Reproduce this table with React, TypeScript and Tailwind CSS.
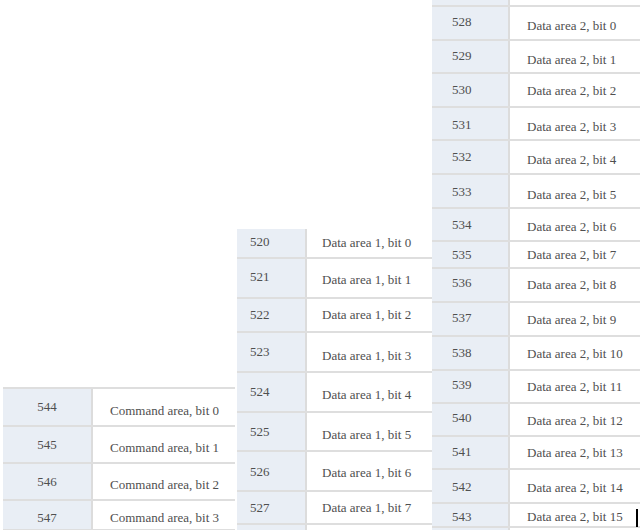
import React from 'react';

// Each row: register number, label, row height, top padding for number and label cells
interface Row {
  num: string;
  label: string;
  h: string;
  numPt: string;
  labelPt: string;
  noBorder?: boolean;
}

interface TableProps {
  rows: Row[];
  pos: string;
  numCol: string;
  numAlign: string;
  labelPl: string;
  bottomBorder?: boolean;
}

function BitTable({ rows, pos, numCol, numAlign, labelPl, bottomBorder }: TableProps) {
  return (
    <div className={`absolute flex flex-col ${pos}`}>
      {rows.map((row, i) => (
        <div
          key={i}
          className={`flex shrink-0 ${row.h} ${row.noBorder ? '' : 'border-t-2 border-[#dedede]'} ${
            bottomBorder && i === rows.length - 1 ? 'border-b-2 border-b-[#dedede]' : ''
          }`}
        >
          <div className={`shrink-0 bg-[#e9eef5] border-r-2 border-[#dcdcdc] ${numCol} ${numAlign} ${row.numPt}`}>
            {row.num}
          </div>
          <div className={`flex-1 bg-white ${labelPl} ${row.labelPt}`}>{row.label}</div>
        </div>
      ))}
    </div>
  );
}

const commandRows: Row[] = [
  { num: '544', label: 'Command area, bit 0', h: 'h-[38px]', numPt: 'pt-[10px]', labelPt: 'pt-[14px]' },
  { num: '545', label: 'Command area, bit 1', h: 'h-[37px]', numPt: 'pt-[10px]', labelPt: 'pt-[13px]' },
  { num: '546', label: 'Command area, bit 2', h: 'h-[37px]', numPt: 'pt-[10px]', labelPt: 'pt-[13px]' },
  { num: '547', label: 'Command area, bit 3', h: 'h-[32px]', numPt: 'pt-[9px]', labelPt: 'pt-[9px]' },
];

const data1Rows: Row[] = [
  { num: '520', label: 'Data area 1, bit 0', h: 'h-[28px]', numPt: 'pt-[5px]', labelPt: 'pt-[6px]', noBorder: true },
  { num: '521', label: 'Data area 1, bit 1', h: 'h-[40px]', numPt: 'pt-[10px]', labelPt: 'pt-[13px]' },
  { num: '522', label: 'Data area 1, bit 2', h: 'h-[34px]', numPt: 'pt-[8px]', labelPt: 'pt-[8px]' },
  { num: '523', label: 'Data area 1, bit 3', h: 'h-[40px]', numPt: 'pt-[11px]', labelPt: 'pt-[15px]' },
  { num: '524', label: 'Data area 1, bit 4', h: 'h-[40px]', numPt: 'pt-[11px]', labelPt: 'pt-[14px]' },
  { num: '525', label: 'Data area 1, bit 5', h: 'h-[39px]', numPt: 'pt-[11px]', labelPt: 'pt-[14px]' },
  { num: '526', label: 'Data area 1, bit 6', h: 'h-[40px]', numPt: 'pt-[12px]', labelPt: 'pt-[13px]' },
  { num: '527', label: 'Data area 1, bit 7', h: 'h-[33px]', numPt: 'pt-[8px]', labelPt: 'pt-[8px]' },
  { num: '', label: '', h: 'h-[12px]', numPt: 'pt-0', labelPt: 'pt-0' },
];

const data2Rows: Row[] = [
  { num: '', label: '', h: 'h-[5px]', numPt: 'pt-0', labelPt: 'pt-0', noBorder: true },
  { num: '528', label: 'Data area 2, bit 0', h: 'h-[34px]', numPt: 'pt-[7px]', labelPt: 'pt-[11px]' },
  { num: '529', label: 'Data area 2, bit 1', h: 'h-[33px]', numPt: 'pt-[7px]', labelPt: 'pt-[11px]' },
  { num: '530', label: 'Data area 2, bit 2', h: 'h-[34px]', numPt: 'pt-[8px]', labelPt: 'pt-[9px]' },
  { num: '531', label: 'Data area 2, bit 3', h: 'h-[33px]', numPt: 'pt-[9px]', labelPt: 'pt-[11px]' },
  { num: '532', label: 'Data area 2, bit 4', h: 'h-[34px]', numPt: 'pt-[8px]', labelPt: 'pt-[11px]' },
  { num: '533', label: 'Data area 2, bit 5', h: 'h-[34px]', numPt: 'pt-[9px]', labelPt: 'pt-[12px]' },
  { num: '534', label: 'Data area 2, bit 6', h: 'h-[33px]', numPt: 'pt-[8px]', labelPt: 'pt-[10px]' },
  { num: '535', label: 'Data area 2, bit 7', h: 'h-[27px]', numPt: 'pt-[5px]', labelPt: 'pt-[5px]' },
  { num: '536', label: 'Data area 2, bit 8', h: 'h-[34px]', numPt: 'pt-[6px]', labelPt: 'pt-[8px]' },
  { num: '537', label: 'Data area 2, bit 9', h: 'h-[34px]', numPt: 'pt-[7px]', labelPt: 'pt-[9px]' },
  { num: '538', label: 'Data area 2, bit 10', h: 'h-[34px]', numPt: 'pt-[8px]', labelPt: 'pt-[9px]' },
  { num: '539', label: 'Data area 2, bit 11', h: 'h-[33px]', numPt: 'pt-[6px]', labelPt: 'pt-[8px]' },
  { num: '540', label: 'Data area 2, bit 12', h: 'h-[33px]', numPt: 'pt-[6px]', labelPt: 'pt-[9px]' },
  { num: '541', label: 'Data area 2, bit 13', h: 'h-[33px]', numPt: 'pt-[7px]', labelPt: 'pt-[8px]' },
  { num: '542', label: 'Data area 2, bit 14', h: 'h-[34px]', numPt: 'pt-[9px]', labelPt: 'pt-[10px]' },
  { num: '543', label: 'Data area 2, bit 15', h: 'h-[24px]', numPt: 'pt-[5px]', labelPt: 'pt-[5px]' },
  { num: '', label: '', h: 'h-[12px]', numPt: 'pt-0', labelPt: 'pt-0' },
];

export default function App() {
  return (
    <div className="relative w-[640px] h-[530px] overflow-hidden bg-white font-['Liberation_Serif','Times_New_Roman',serif] text-[13px] leading-[15px] text-[#4f4f4f]">
      <BitTable
        rows={commandRows}
        pos="left-[3px] top-[387px] w-[232px]"
        numCol="w-[90px]"
        numAlign="text-center"
        labelPl="pl-[17px]"
        bottomBorder
      />
      <BitTable
        rows={data1Rows}
        pos="left-[237px] top-[229px] w-[195px]"
        numCol="w-[70px]"
        numAlign="pl-[13px]"
        labelPl="pl-[15px]"
      />
      <BitTable
        rows={data2Rows}
        pos="left-[432px] top-0 w-[208px]"
        numCol="w-[78px]"
        numAlign="pl-[20px]"
        labelPl="pl-[17px]"
      />
      {/* text caret */}
      <div className="absolute left-[636px] top-[509px] w-[2px] h-[18px] bg-black" />
    </div>
  );
}
